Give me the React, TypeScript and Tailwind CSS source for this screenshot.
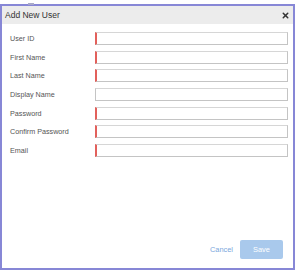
import { X } from 'lucide-react'

const fields = [
  { label: 'User ID', required: true },
  { label: 'First Name', required: true },
  { label: 'Last Name', required: true },
  { label: 'Display Name', required: false },
  { label: 'Password', required: true },
  { label: 'Confirm Password', required: true },
  { label: 'Email', required: true },
]

export default function App() {
  return (
    <div className="w-[297px] h-[271px] bg-white pt-[4px] font-['Liberation_Sans',Arial,sans-serif]">
      <div className="relative w-[295px] h-[266px] border-2 border-[#8787d6] flex flex-col">
        {/* little tab on the top edge */}
        <span className="absolute -top-[3px] left-[26px] w-[6px] h-[2px] bg-[#a9a9c9]" />

        {/* Header */}
        <div className="h-[18px] bg-[#ececec] flex items-center justify-between pl-[3px] pr-[3px]">
          <span className="text-[8.5px] text-[#333] leading-none">Add New User</span>
          <X className="w-[9px] h-[9px] text-[#333]" strokeWidth={4} />
        </div>

        {/* Fields */}
        <div className="flex flex-col gap-[5.7px] pt-[8px] pl-[8px] pr-[5px]">
          {fields.map((f) => (
            <div key={f.label} className="flex items-center h-[13px]">
              <label className="w-[85px] shrink-0 text-[7.2px] text-[#555] leading-none">{f.label}</label>
              <input
                className={`flex-1 min-w-0 h-[13px] border border-[#c4c4c4] border-t-[#d6d6d6] outline-none bg-white ${
                  f.required ? 'border-l-2 border-l-[#e2605b]' : ''
                }`}
              />
            </div>
          ))}
        </div>

        {/* Footer */}
        <div className="mt-auto flex items-center justify-end gap-[7px] pr-[10px] pb-[9px]">
          <button className="text-[7.4px] text-[#7aa6dc] leading-none">Cancel</button>
          <button className="w-[43px] h-[19px] rounded-[2px] bg-[#a9c9ec] text-white text-[7.4px] leading-none">
            Save
          </button>
        </div>
      </div>
    </div>
  )
}
